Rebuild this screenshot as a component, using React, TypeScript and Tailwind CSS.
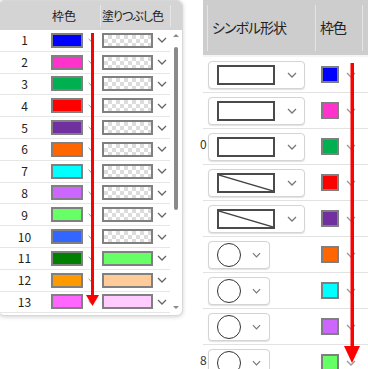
import React from 'react';

type LeftRow = { n: number; border: string; fill: string | null };
type RightRow = { shape: 'rect' | 'diag' | 'circle'; color: string; ghost?: string };

const leftRows: LeftRow[] = [
  { n: 1, border: 'bg-[#0000ff]', fill: null },
  { n: 2, border: 'bg-[#ff33cc]', fill: null },
  { n: 3, border: 'bg-[#00b050]', fill: null },
  { n: 4, border: 'bg-[#ff0000]', fill: null },
  { n: 5, border: 'bg-[#7030a0]', fill: null },
  { n: 6, border: 'bg-[#ff6600]', fill: null },
  { n: 7, border: 'bg-[#00ffff]', fill: null },
  { n: 8, border: 'bg-[#cc66ff]', fill: null },
  { n: 9, border: 'bg-[#66ff66]', fill: null },
  { n: 10, border: 'bg-[#3366ff]', fill: null },
  { n: 11, border: 'bg-[#008000]', fill: 'bg-[#66ff66]' },
  { n: 12, border: 'bg-[#ff9900]', fill: 'bg-[#ffcc99]' },
  { n: 13, border: 'bg-[#ff66ff]', fill: 'bg-[#ffccff]' },
];

const rightRows: RightRow[] = [
  { shape: 'rect', color: 'bg-[#0000ff]' },
  { shape: 'rect', color: 'bg-[#ff33cc]' },
  { shape: 'rect', color: 'bg-[#00b050]', ghost: '0' },
  { shape: 'diag', color: 'bg-[#ff0000]' },
  { shape: 'diag', color: 'bg-[#7030a0]' },
  { shape: 'circle', color: 'bg-[#ff6600]' },
  { shape: 'circle', color: 'bg-[#00ffff]' },
  { shape: 'circle', color: 'bg-[#cc66ff]' },
  { shape: 'circle', color: 'bg-[#66ff66]', ghost: '8' },
];

const Chevron = ({ className }: { className: string }) => (
  <svg viewBox="0 0 10 6" className={className} fill="none" stroke="currentColor" strokeWidth={1.3}>
    <path d="M1 1l4 4 4-4" />
  </svg>
);

const checker =
  'bg-[image:conic-gradient(#dcdcdc_90deg,#ffffff_90deg_180deg,#dcdcdc_180deg_270deg,#ffffff_270deg)] bg-[length:8px_8px]';

const LeftTable = () => (
  <div className="-ml-[2px] w-[185px] h-[316px] shrink-0 rounded-md border border-[#d8d8d8] bg-white shadow-[0_1px_4px_rgba(0,0,0,0.18)] overflow-hidden flex flex-col text-[12px] text-[#222]">
    {/* header */}
    <div className="h-[29px] shrink-0 bg-[#d4d4d4] flex items-center">
      <div className="w-[51px]" />
      <div className="w-[50px] pl-[2px] h-full flex items-center">枠色</div>
      <div className="w-px h-[22px] bg-[#e6e6e6]" />
      <div className="w-[69px] pl-[1px] h-full flex items-center tracking-[-1px] [font-feature-settings:'palt']">塗りつぶし色</div>
      <div className="w-px h-[22px] bg-[#e6e6e6]" />
    </div>
    <div className="flex-1 flex">
      <div className="w-[171px]">
        {leftRows.map((r) => (
          <div key={r.n} className="h-[21.8px] flex items-center border-b border-[#e6e6e6]">
            <div className="w-[51px] text-center">{r.n}</div>
            <div className="w-[50px] flex items-center pl-[1px]">
              <div className={`w-[32px] h-[15px] border-2 border-[#808080] ${r.border}`} />
              <Chevron className="ml-[5px] w-[6px] h-[4px] text-[#777]" />
            </div>
            <div className="w-[70px] flex items-center pl-[2px]">
              <div className={`w-[51px] h-[15px] border-2 border-[#808080] ${r.fill ?? checker}`} />
              <Chevron className="ml-[4px] w-[10px] h-[6px] text-[#666]" />
            </div>
          </div>
        ))}
      </div>
      {/* scrollbar */}
      <div className="w-[12px] flex flex-col items-center pt-[4px] pb-[6px]">
        <div className="w-0 h-0 border-x-[3px] border-x-transparent border-b-[3px] border-b-[#8a8a8a]" />
        <div className="mt-[10px] w-[4px] h-[163px] rounded-full bg-[#8a8a8a]" />
        <div className="flex-1" />
        <div className="w-0 h-0 border-x-[3px] border-x-transparent border-t-[3px] border-t-[#8a8a8a]" />
      </div>
    </div>
  </div>
);

const Shape = ({ shape }: { shape: RightRow['shape'] }) => {
  if (shape === 'circle') {
    return (
      <div className="relative w-[62px] h-[28px] rounded-[4px] border border-[#d4d4d4] bg-white shadow-[0_1px_1px_rgba(0,0,0,0.12)] flex items-center pl-[8px]">
        <div className="w-[24px] h-[24px] rounded-full border-[1.5px] border-[#333]" />
        <Chevron className="ml-[11px] w-[9px] h-[6px] text-[#777]" />
      </div>
    );
  }
  return (
    <div className="relative w-[97px] h-[28px] rounded-[4px] border border-[#d4d4d4] bg-white shadow-[0_1px_1px_rgba(0,0,0,0.12)] flex items-center pl-[8px]">
      <div className="w-[58px] h-[20px] border-2 border-[#4a4a4a]">
        {shape === 'diag' && (
          <svg viewBox="0 0 54 16" preserveAspectRatio="none" className="w-full h-full">
            <line x1="0" y1="0" x2="54" y2="16" stroke="#444" strokeWidth="1.3" />
          </svg>
        )}
      </div>
      <Chevron className="ml-[12px] w-[10px] h-[6px] text-[#777]" />
    </div>
  );
};

const RightTable = () => (
  <div className="ml-[20px] flex-1 flex flex-col text-[#222]">
    <div className="h-[55px] shrink-0 bg-[#cdcdcd] flex items-center text-[14px] tracking-[-1px] [font-feature-settings:'palt']">
      <div className="w-[4px]" />
      <div className="w-px h-[46px] bg-[#e4e4e4]" />
      <div className="w-[107px] pl-[4px]">シンボル形状</div>
      <div className="w-px h-[46px] bg-[#e4e4e4]" />
      <div className="w-[46px] pl-[4px]">枠色</div>
      <div className="w-px h-[46px] bg-[#e4e4e4]" />
    </div>
    <div className="h-[2px] shrink-0 bg-[#f4f4f4]" />
    {rightRows.map((r, i) => (
      <div key={i} className="relative h-[36px] shrink-0 flex items-center border-b border-[#e2e2e2]">
        {r.ghost && (
          <span className="absolute left-[-3px] top-[7px] text-[12px] leading-[16px] text-[#333]">{r.ghost}</span>
        )}
        <div className="w-[113px] pl-[5px] flex items-center">
          <Shape shape={r.shape} />
        </div>
        <div className="pl-[5px] flex items-center">
          <div className={`w-[18px] h-[17px] border-2 border-[#7f7f7f] ${r.color}`} />
          <Chevron className="ml-[7px] w-[10px] h-[6px] text-[#999]" />
        </div>
      </div>
    ))}
  </div>
);

export default function App() {
  return (
    <div className="relative w-[368px] h-[369px] overflow-hidden bg-white flex font-['Noto_Sans_CJK_JP','Noto_Sans',sans-serif]">
      <LeftTable />
      <RightTable />

      {/* red annotation arrows */}
      <svg className="absolute left-[86px] top-[33px]" width="13" height="273">
        <rect x="5" y="0" width="3" height="263" fill="#ff0000" />
        <polygon points="0,262 13,262 6.5,273" fill="#ff0000" />
      </svg>
      <svg className="absolute left-[344px] top-[63px]" width="16" height="301">
        <rect x="6.5" y="0" width="3.5" height="285" fill="#ff0000" />
        <polygon points="0,283 16,283 8,300" fill="#ff0000" />
      </svg>
    </div>
  );
}
